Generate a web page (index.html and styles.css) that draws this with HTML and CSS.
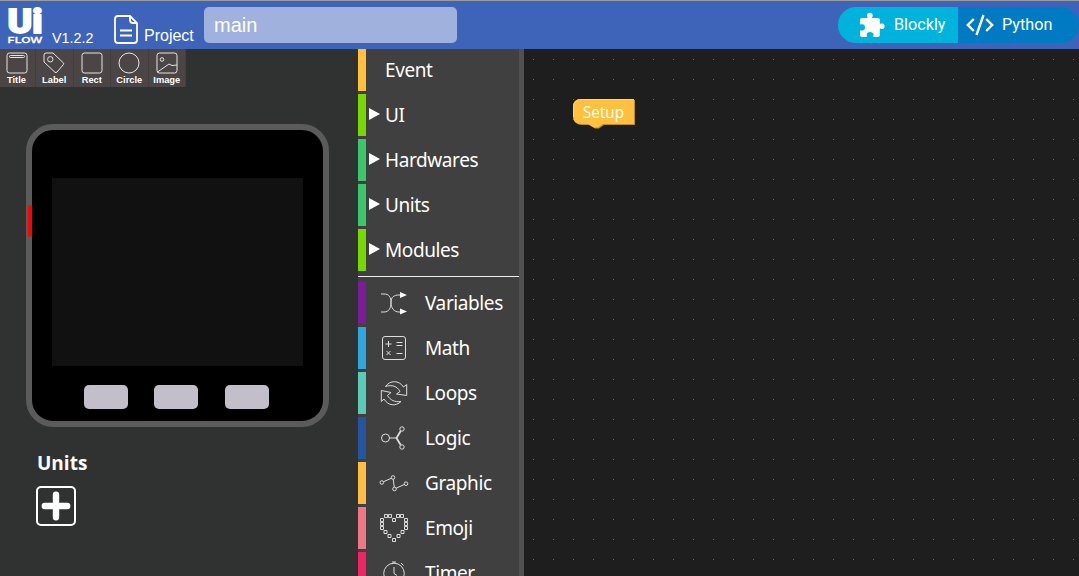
FILE: index.html
```html
<!DOCTYPE html>
<html lang="en">
<head>
<meta charset="utf-8">
<title>UIFlow</title>
<link rel="stylesheet" href="styles.css">
</head>
<body>
<header class="header">
  <svg class="logo" width="40" height="40" viewBox="0 0 40 40">
    <text class="logo-ui" x="0.5" y="26" textLength="35" lengthAdjust="spacingAndGlyphs">Ui</text>
    <text class="logo-flow" x="0.5" y="36" textLength="35" lengthAdjust="spacingAndGlyphs">FLOW</text>
  </svg>
  <span class="version">V1.2.2</span>
  <svg class="doc-icon" width="24" height="29" viewBox="0 0 24 29" fill="none" stroke="#fff" stroke-width="1.8">
    <path d="M4 1H16L23 8V25Q23 28 20 28H4Q1 28 1 25V4Q1 1 4 1ZM16 1V5Q16 8 19 8H23M6 15.5H18M6 20.5H18"/>
  </svg>
  <span class="project">Project</span>
  <div class="name-field">main</div>
  <nav class="modes">
    <div class="mode blockly">
      <svg width="26" height="26" viewBox="0 0 26 26" fill="#fff"><path d="M3 6H8.5C9 5.5 8 4.7 8 3.5C8 1.7 9.1.7 10.8.7S13.7 1.7 13.7 3.5C13.7 4.7 12.8 5.5 13.2 6H19Q20.8 6 20.8 7.8V11.7C21.3 11.9 21.9 11.4 23.2 11.4C24.8 11.4 25.6 12.5 25.6 14.2S24.8 17 23.2 17C21.9 17 21.3 16.3 20.8 16.5V23.2Q20.8 25 19 25H14.5C13.9 24.4 14.6 23.7 14.6 22.5C14.6 21 13 20 11 20S7.7 21 7.7 22.5C7.7 23.7 8.3 24.4 7.7 25H3Q1 25 1 23V18.5C1.6 18.3 2.2 18.5 3.5 18.5C5 18.5 6 17.2 6 15.4S5 12.3 3.5 12.3C2.2 12.3 1.6 12.5 1 12.3V8Q1 6 3 6Z"/></svg>
      <span>Blockly</span>
    </div>
    <div class="mode python">
      <svg width="28" height="22" viewBox="0 0 28 22" fill="none" stroke="#fff" stroke-width="2.4"><path d="M7.8 5L1.8 11L7.8 17M20.2 5L26.2 11L20.2 17M17.5 1L10.5 21"/></svg>
      <span>Python</span>
    </div>
  </nav>
</header>
<main class="main">
  <section class="left">
    <div class="widgets">
      <div class="widget"><svg width="22" height="22" viewBox="0 0 22 22"><rect x="1" y="1" width="20" height="20" rx="2.5"/><rect x="3.5" y="3.5" width="15" height="2" rx="1"/></svg><span>Title</span></div>
      <div class="widget"><svg width="22" height="22" viewBox="0 0 22 22"><path d="M3 1H10L20.5 11Q21 12 20.3 12.7L14 20Q13 21 12 20.3L1 10V3Q1 1 3 1Z"/><circle cx="7.3" cy="7.3" r="2.7"/></svg><span>Label</span></div>
      <div class="widget"><svg width="22" height="22" viewBox="0 0 22 22"><rect x="1" y="1" width="20" height="20" rx="2.5"/></svg><span>Rect</span></div>
      <div class="widget"><svg width="22" height="22" viewBox="0 0 22 22"><circle cx="11" cy="11" r="10"/></svg><span>Circle</span></div>
      <div class="widget"><svg width="22" height="22" viewBox="0 0 22 22"><rect x="1" y="1" width="20" height="20" rx="2.5"/><circle cx="6" cy="7.5" r="1.8"/><path d="M1.5 20L13 12L16 13.5L21 13"/></svg><span>Image</span></div>
    </div>
    <div class="device">
      <i class="power"></i>
      <div class="screen"></div>
      <div class="buttons"><i></i><i></i><i></i></div>
    </div>
    <h2 class="units-title">Units</h2>
    <div class="add"><svg width="30" height="30" viewBox="0 0 30 30"><path d="M15 3.8V26.2M3.8 15H26.2" stroke="#fff" stroke-width="6.4" stroke-linecap="round"/></svg></div>
  </section>
  <aside class="toolbox">
    <div class="row event"><span class="arrow none"></span><span>Event</span></div>
    <div class="row lime"><span class="arrow"></span><span>UI</span></div>
    <div class="row green"><span class="arrow"></span><span>Hardwares</span></div>
    <div class="row green"><span class="arrow"></span><span>Units</span></div>
    <div class="row lime"><span class="arrow"></span><span>Modules</span></div>
    <div class="separator"></div>
    <div class="row variables"><svg class="icon" viewBox="0 0 30 30"><path d="M2 6H5C10 6 12 9 12 14.5S15 24 20 24H22M2 24H5C10 24 12 20 12 14.5S15 7 20 7H22"/><path class="solid" d="M21 4L28 7L21 10ZM21 20.5L28 23.5L21 26.5Z"/></svg><span>Variables</span></div>
    <div class="row math"><svg class="icon" viewBox="0 0 30 30"><rect x="3.5" y="3.5" width="23" height="23" rx="2.5"/><path d="M6.5 11H12.5M9.5 8V14M17.5 9.5H23.5M17.5 12.5H23.5M7.5 18L11.5 22M11.5 18L7.5 22M17.5 20.5H23.5"/></svg><span>Math</span></div>
    <div class="row loops"><svg class="icon" viewBox="0 0 30 30"><path d="M6.5 8.5C11 2 20 2 24.5 9L27.7 6.5V17.5L17.5 16L21 13.5C18 8 13 6.5 6.5 8.5ZM22 23.5C17 28.5 9 28 5 21L2.3 23.5V12.5L12 14.5L8.5 17.5C11 22 16 24.5 22 23.5Z"/></svg><span>Loops</span></div>
    <div class="row logic"><svg class="icon" viewBox="0 0 30 30"><circle cx="6.5" cy="15" r="4"/><circle cx="23" cy="6" r="2.2"/><circle cx="23" cy="24" r="2.2"/><path d="M10.5 15H17"/><path stroke-width="1.8" d="M21.7 8L17.5 15L21.7 22"/></svg><span>Logic</span></div>
    <div class="row graphic"><svg class="icon" viewBox="0 0 30 30"><circle cx="2.8" cy="14.5" r="1.8"/><circle cx="14" cy="9.5" r="1.8"/><circle cx="15.5" cy="21" r="1.8"/><circle cx="27" cy="15.7" r="1.8"/><path d="M4.5 13.7L12.3 10.3M14.2 11.3L15.3 19.2M17.2 20.2L25.3 16.5"/></svg><span>Graphic</span></div>
    <div class="row emoji"><svg class="icon" viewBox="0 0 30 30"><path d="M5.5 1.5h3v3h-3zM9.5 1.5h3v3h-3zM17.5 1.5h3v3h-3zM21.5 1.5h3v3h-3zM13.5 5.5h3v3h-3zM1.5 5.5h3v3h-3zM1.5 9.5h3v3h-3zM1.5 13.5h3v3h-3zM25.5 5.5h3v3h-3zM25.5 9.5h3v3h-3zM25.5 13.5h3v3h-3zM5 17.5h3v3h-3zM9 21.5h3v3h-3zM13.5 25.5h3v3h-3zM18 21.5h3v3h-3zM22 17.5h3v3h-3z"/></svg><span>Emoji</span></div>
    <div class="row timer"><svg class="icon" viewBox="0 0 30 30"><circle cx="15" cy="15.5" r="10.3"/><path d="M13 4H17M15 4V5M22 5L24.5 7.5M15 9V15.5L18 17.5"/></svg><span>Timer</span></div>
  </aside>
  <div class="scrollbar"></div>
  <section class="workspace">
    <div class="block">
      <svg width="62" height="30" viewBox="0 0 62 30">
        <path fill="#b88d2d" d="M9 1H62V26H31L26 29.5H22L16 26H9Q1 26 1 18V9Q1 1 9 1Z"/>
        <path fill="#ffc13d" d="M8 0H61V25H30L25 28.5H21L15 25H8Q0 25 0 17V8Q0 0 8 0Z"/>
        <path fill="none" stroke="#ffd47a" d="M.5 18V8Q.5 .5 8 .5H61"/>
        <text class="block-text" x="10" y="18.5" textLength="41" lengthAdjust="spacingAndGlyphs">Setup</text>
      </svg>
    </div>
  </section>
</main>
</body>
</html>
```
FILE: styles.css
```css
* { box-sizing: border-box; }
body { margin: 0; width: 1079px; height: 576px; overflow: hidden; display: flex; flex-direction: column; background: #1e1e1e; color: #fff; font-family: "Liberation Sans", Arial, sans-serif; }
svg { display: block; flex: none; }
.header { height: 49px; flex: none; display: flex; align-items: flex-start; background: #3e64ba; border-top: 1px solid #9b9b9b; padding-left: 7px; }
.logo { margin-top: 6px; fill: #fff; overflow: visible; }
.logo-ui { font: 900 34px Roboto, sans-serif; stroke: #fff; stroke-width: 1.8; }
.logo-flow { font: 500 8px Inter, sans-serif; stroke: #fff; stroke-width: .3; }
.version { width: 62px; padding-left: 5px; margin-top: 29px; font-size: 14.3px; line-height: 16px; }
.doc-icon { margin: 14px 0 0 5px; }
.project { width: 66px; margin-top: 25px; padding-left: 6px; font-size: 16px; line-height: 20px; }
.name-field { width: 253px; height: 36px; margin-top: 6px; border-radius: 5px; background: #9fb1dc; padding-left: 10px; font-size: 20px; line-height: 36px; }
.modes { display: flex; margin: 6px 0 0 auto; width: 241px; height: 36px; border-radius: 18px; overflow: hidden; font: 16.2px/36px Roboto, sans-serif; }
.mode { display: flex; align-items: center; }
.blockly { width: 120px; background: #00b3dc; padding-left: 21px; gap: 9px; }
.python { width: 121px; background: #007bc3; padding-left: 8px; gap: 8px; }
.main { flex: 1; min-height: 0; display: flex; }
.left { width: 358px; flex: none; background: #303231; }
.widgets { display: flex; width: 186px; height: 38px; background: #4b4645; }
.widget { flex: none; width: 37.5px; padding-top: 3px; display: flex; flex-direction: column; align-items: center; font: bold 9.3px/11px "Liberation Sans", sans-serif; border-right: 1px solid #423f3e; }
.widget:first-child { width: 36px; padding-right: 2px; }
.widget span { margin-top: 1px; }
.widget svg { fill: none; stroke: #e5e5e5; stroke-width: 1; }
.device { position: relative; width: 303px; height: 303px; margin: 37px 0 0 26px; border: 6px solid #5b5b5b; border-radius: 27px; background: #000; padding: 48px 20px 0; }
.power { position: absolute; left: -4.5px; top: 75px; width: 4.5px; height: 32px; border-radius: 2px; background: #f00; }
.screen { width: 251px; height: 188px; background: #111; }
.buttons { display: flex; gap: 26.4px; margin: 19.4px 0 0 32px; }
.buttons i { width: 44px; height: 24px; border-radius: 5px; background: #c3bfca; }
.units-title { margin: 21.5px 0 0 37px; font: bold 19px/28px "Open Sans", "Noto Sans", sans-serif; }
.add { width: 40px; height: 40px; margin: 9px 0 0 36px; border: 2px solid #fff; border-radius: 5px; display: flex; align-items: center; justify-content: center; }
.toolbox { width: 161px; flex: none; overflow: hidden; background: #404040; }
.row { height: 42px; margin-bottom: 3px; border-left: 8px solid; display: flex; align-items: center; font: 19px/42px "Noto Sans", "Open Sans", sans-serif; letter-spacing: -.4px; }
.row > span:last-child { color: #fff; }
.arrow { width: 11px; height: 0; margin: 0 5px 2px 3px; border: solid transparent; border-width: 6.5px 0 6.5px 11px; border-left-color: #fff; }
.arrow.none { border-color: transparent; }
.icon { width: 30px; height: 30px; margin: 0 16px 0 13px; fill: none; stroke: #ddd; stroke-width: 1; }
.icon .solid { fill: #fff; stroke: none; }
.separator { height: 1px; margin: 5px 0; background: #eee; }
.row:has(+ .separator) { margin-bottom: 0; }
.event { border-color: #ffc03d; }
.lime { border-color: #78d800; }
.green { border-color: #3bc66b; }
.variables { border-color: #7c1c98; }
.math { border-color: #2fa8df; }
.loops { border-color: #5bcab7; }
.logic { border-color: #23569f; }
.graphic { border-color: #ffbd43; }
.emoji { border-color: #ee7788; }
.timer { border-color: #f02463; }
.scrollbar { width: 5px; flex: none; background: #505050; }
.workspace { flex: 1; padding: 50px 0 0 49px; background: #1e1e1e conic-gradient(from 270deg at 1px 1px, #6c6c6c 90deg, transparent 0) 9px 10px / 20px 20px; }
.block-text { fill: #fff; font: 15.5px "Open Sans", "Noto Sans", sans-serif; }
```
